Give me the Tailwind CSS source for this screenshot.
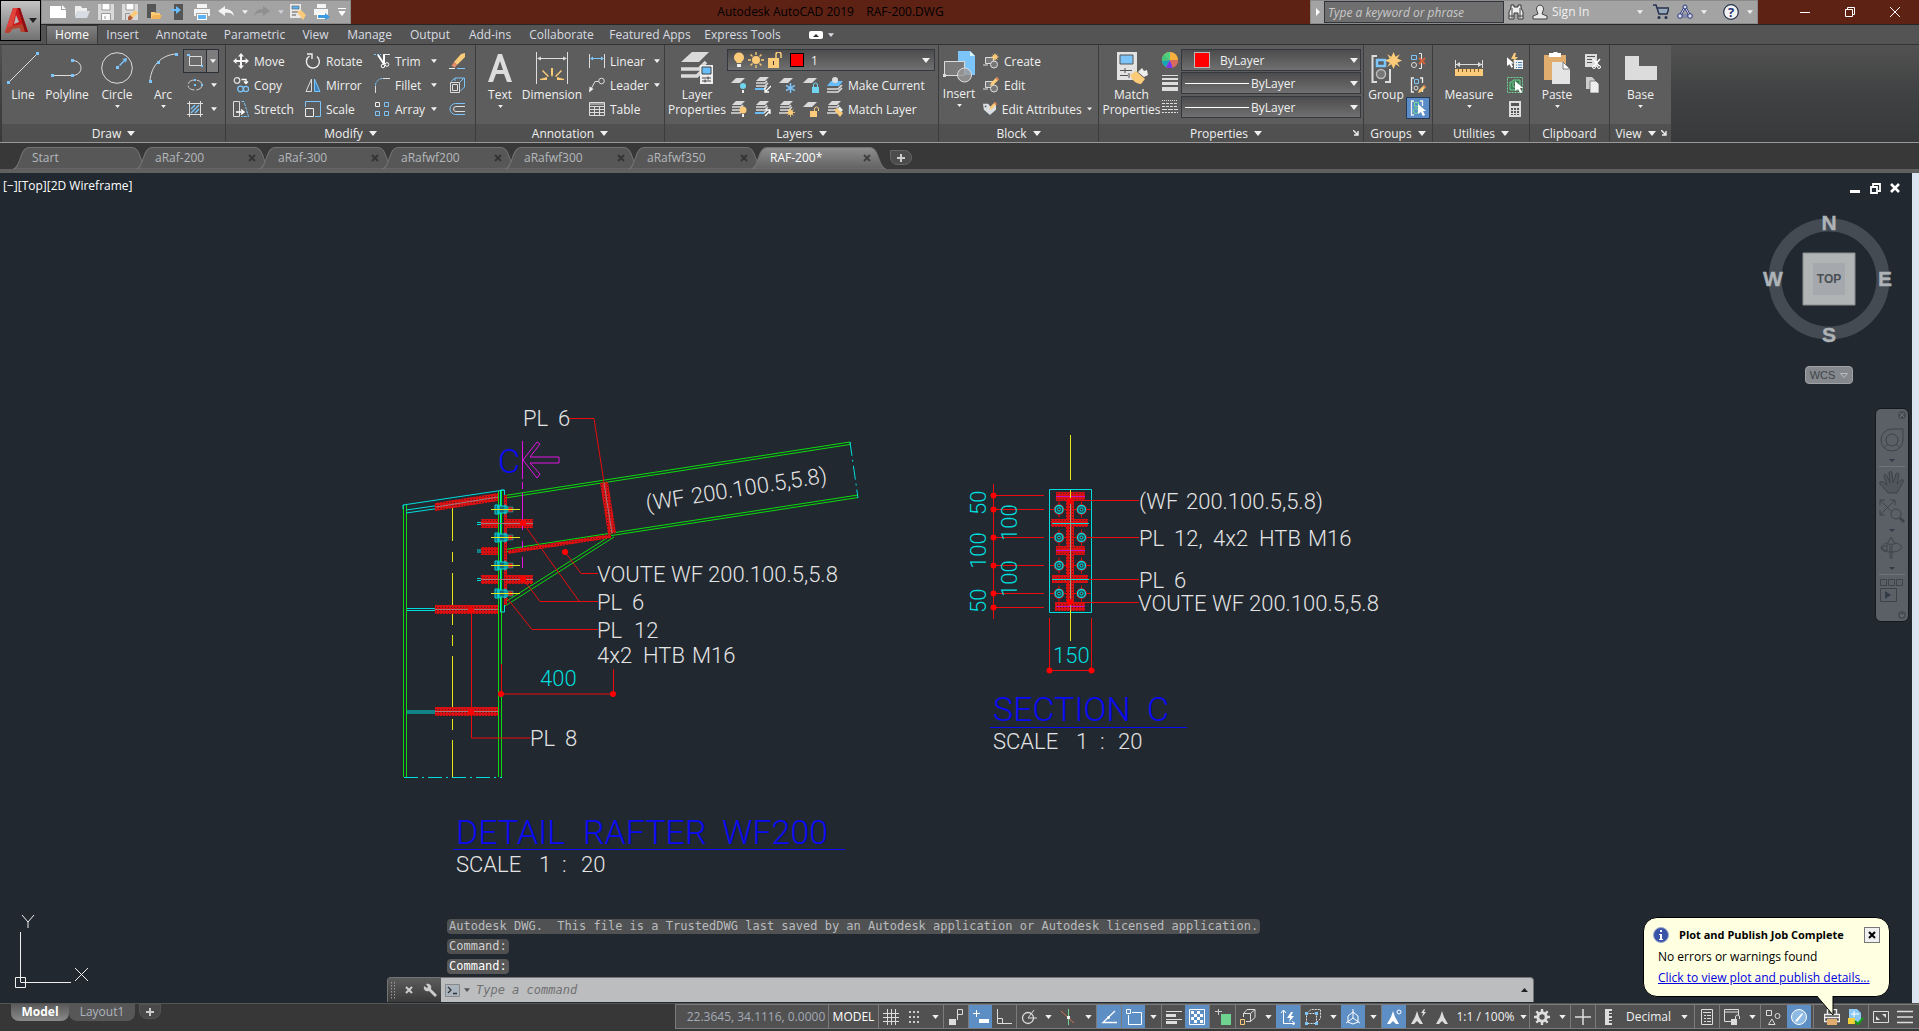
<!DOCTYPE html>
<html lang="en">
<head>
    <meta charset="UTF-8">
    <meta name="viewport" content="width=device-width, initial-scale=1.0">
    <title>Autodesk AutoCAD 2019 - RAF-200.DWG</title>
    <script src="https://cdn.jsdelivr.net/npm/@tailwindcss/browser@4"></script>
</head>
<body class="flex h-screen flex-col overflow-hidden bg-[#212830] font-['Open_Sans','Noto_Sans',sans-serif] text-xs text-[#f0f0f0]">

    <!-- shared icons -->
    <svg class="absolute h-0 w-0">
        <defs>
            <symbol id="down" viewBox="0 0 8 5"><path d="M0 0h8L4 5z" fill="currentColor"/></symbol>
            <symbol id="corner" viewBox="0 0 6 6"><path d="M0 0l4 4M5 1v4H1" fill="none" stroke="currentColor" stroke-width="1.4"/></symbol>
            <symbol id="close" viewBox="0 0 8 8"><path d="M1 1l6 6M7 1L1 7" fill="none" stroke="currentColor" stroke-width="2"/></symbol>
            <linearGradient id="active" x2="0" y2="1"><stop stop-color="#8e8e8e"/><stop offset="1" stop-color="#626262"/></linearGradient>
            <symbol id="tab" viewBox="0 0 132 21" preserveAspectRatio="none"><path d="M0 21C8 20 6 .5 16 .5h100c10 0 8 19 16 20.500z" stroke="#727272"/></symbol>

            <symbol id="printer" viewBox="0 0 16 16"><path d="M3 0h10v4H3zM0 5h16v7h-2V9H2v3H0z" fill="#f4f4f4"/><path d="M3 10h10v6H3z" fill="#fff"/><path d="M4 11h8v4H4z" fill="#5db4f5"/></symbol>
            <symbol id="move" viewBox="0 0 16 16"><path d="M8 0l3 3.500H9V7h3.500V5L16 8l-3.500 3V9H9v3.500h2L8 16l-3-3.500h2V9H3.500v2L0 8l3.500-3v2H7V3.500H5z" fill="#f4f4f4"/></symbol>
            <symbol id="copy" viewBox="0 0 16 16"><g fill="none" stroke-width="1.300"><circle cx="4" cy="3.500" r="2.800" stroke="#ddd"/><path d="M8.500 2.500H13V6M11 4.500l2 2 2-2" stroke="#fff"/><circle cx="7.500" cy="12" r="2.800" stroke="#7cc5fb"/><circle cx="13" cy="12" r="2.600" stroke="#7cc5fb"/></g></symbol>
            <symbol id="stretch" viewBox="0 0 16 16"><path d="M8.500.5h2.500l4.500 15H8" fill="none" stroke="#7cc5fb" stroke-dasharray="3 1"/><path d="M.5 15.500V.5h6v15z" fill="none" stroke="#ddd"/><path d="M3 11h7M8 8.500l3 2.500-3 2.500" fill="none" stroke="#fff" stroke-width="1.500"/></symbol>
            <symbol id="rotate" viewBox="0 0 16 16"><path d="M4.500 3A6.500 6.500 0 1 0 12 3.500" fill="none" stroke="#eee" stroke-width="1.400"/><path d="M2 1h5v5" fill="none" stroke="#eee" stroke-width="1.400"/></symbol>
            <symbol id="mirror" viewBox="0 0 16 16"><path d="M6.500 2v12.500H1z" fill="none" stroke="#ddd"/><path d="M9.500 2v12.500H15z" fill="#3d83bd" stroke="#7cc5fb"/></symbol>
            <symbol id="scale" viewBox="0 0 16 16"><path d="M.5 6V.5h15v15H10" fill="none" stroke="#7cc5fb"/><path d="M.5 7.500h8v8h-8z" fill="none" stroke="#eee"/></symbol>
            <symbol id="trim" viewBox="0 0 16 16"><path d="M0 1.500h7" stroke="#7cc5fb" stroke-dasharray="2 1"/><path d="M9 1.500h7" stroke="#eee"/><path d="M4 2l6 9M10 2v9" stroke="#fff" stroke-width="2"/><circle cx="9" cy="13" r="1.800" fill="none" stroke="#fff"/><circle cx="13" cy="11.500" r="1.800" fill="none" stroke="#fff"/></symbol>
            <symbol id="fillet" viewBox="0 0 16 16"><path d="M1.500 16V9M9 1.500h7" stroke="#ddd"/><path d="M1.500 8.500a7 7 0 0 1 7-7" fill="none" stroke="#7cc5fb" stroke-dasharray="3 1"/></symbol>
            <symbol id="array" viewBox="0 0 16 16"><g fill="none"><path d="M1.500 1.500h4v4h-4z" stroke="#eee"/><path d="M10.500 1.500h4v4h-4zM1.500 10.500h4v4h-4zM10.500 10.500h4v4h-4z" stroke="#7cc5fb"/></g></symbol>
            <symbol id="erase" viewBox="0 0 16 16"><path d="M12 1l4-1v4l-8 8-3-3z" fill="#fccb79"/><path d="M5 9l3 3-2 2.500L2.500 13z" fill="#e58d6a"/><path d="M0 15.500h6" stroke="#eee"/><path d="M8 15.500h8" stroke="#7cc5fb"/></symbol>
            <symbol id="explode" viewBox="0 0 16 16"><path d="M1.500 5.500h9v10h-9zM3.500 7.500h5v6h-5z" fill="none" stroke="#ddd"/><path d="M2 4.500l4-3.500h9.500v9l-4 4M11 5l4-4M6 1v3" fill="none" stroke="#7cc5fb"/></symbol>
            <symbol id="offset" viewBox="0 0 16 16"><path d="M16 2.500H6.500a5.500 5.500 0 0 0 0 11H16" fill="none" stroke="#7cc5fb"/><path d="M16 5.500H7a2.500 2.500 0 0 0 0 5h9" fill="none" stroke="#ddd"/></symbol>
            <symbol id="linear" viewBox="0 0 16 16"><path d="M.5 1v14M15.500 1v14" stroke="#ddd"/><path d="M2 5.500h12" stroke="#7cc5fb"/><path d="M1 5.500l3-2v4zM15 5.500l-3-2v4z" fill="#7cc5fb"/></symbol>
            <symbol id="leader" viewBox="0 0 16 16"><circle cx="12.500" cy="4" r="2.800" fill="none" stroke="#ddd"/><path d="M9.500 4.500H6L2 12" fill="none" stroke="#ddd"/><path d="M0 15.500l.5-6 4 2.500z" fill="#eee"/></symbol>
            <symbol id="table" viewBox="0 0 16 16"><path d="M.5 1.500h15v13H.5zM.5 5.500h15M.5 8.500h15M.5 11.500h15M5.500 5v9M10.500 5v9M.5 3h15" fill="none" stroke="#ddd"/></symbol>
            <symbol id="sheet" viewBox="0 0 16 16"><path d="M5 1h9l-5 5H0z" fill="#dadada"/></symbol>
            <symbol id="stack" viewBox="0 0 16 16"><path d="M5 0h9l-4 4H1z" fill="#dadada"/><path d="M1 6h9l2-2M1 9h9l3-3" fill="none" stroke="#dadada" stroke-width="1.700"/><path d="M0 12h9l3-3" fill="none" stroke="#dadada" stroke-width="1.700"/></symbol>
            <symbol id="pencil" viewBox="0 0 8 8"><path d="M6 0l2 2-5 5-3 1 1-3z" fill="#fccb79"/><path d="M6 0l2 2-1 1-2-2z" fill="#d3724f"/></symbol>
            <symbol id="shape" viewBox="0 0 16 16"><path d="M2.500 3.500h8v6h-8zM0 11h5" fill="#777" stroke="#ddd"/><circle cx="11" cy="10.500" r="3.500" fill="#777" stroke="#ddd"/></symbol>
            <symbol id="spark" viewBox="0 0 16 16"><path d="M8 0l2 4.500L14 2l-2.500 4L16 8l-4.500 2 2.500 4-4-2.500L8 16l-2-4.500L2 14l2.500-4L0 8l4.500-2L2 2l4 2.500z" fill="#fccb79"/></symbol>
            <symbol id="cursor" viewBox="0 0 8 12"><path d="M0 0l8 7H5l2 4-2 1-2-4-3 2z" fill="#fff"/></symbol>
            <symbol id="brackets" viewBox="0 0 16 16"><path d="M4 1H1.500v14H4M10 1h2.500v5M12.500 12v3" fill="none" stroke="#eee" stroke-width="1.300"/></symbol>

            <pattern id="hatch" width="3" height="3" patternUnits="userSpaceOnUse"><path d="M0 0h3v3H0z" fill="#d81012"/><path d="M1 1h1v1H1z" fill="#5a1a20"/></pattern>
            <g id="bolt">
                <path d="M-6-4.500h3v9h-3zM-3-3.500h9v7h-9zM4-5v10M-2-5v10" fill="#17687a" stroke="#00d8d8"/>
                <path d="M7-2.500h5v5H7z" fill="#c11" stroke="#00d8d8" stroke-width=".5"/>
                <path d="M-10 0h29" stroke="#e6e619"/>
            </g>
            <g id="boltend">
                <path d="M-9 0H9M0-8V8" stroke="#f00"/>
                <circle r="5.500" fill="#a01318"/><circle r="4" fill="#17505a" stroke="#0dd" stroke-width="1.300"/><circle r="1.500" fill="#600" stroke="#0dd"/>
            </g>
        </defs>
    </svg>

    <!-- title bar -->
    <header class="relative flex h-[25px] shrink-0 items-stretch border-b border-[#262626] bg-[#5e2215]">
        <button aria-label="Application menu" class="absolute left-0 top-0 z-10 flex h-[41px] w-[41px] items-center justify-center border border-black bg-linear-to-b from-[#c4c4c4] to-[#727272]">
            <svg class="h-[27px] w-[25px]" viewBox="0 0 25 27"><path d="M1 25L9 1h7l8 24h-7l-1-5-9 1-1 4z" fill="#c9191d"/><path d="M9 1h4L7 25H1z" fill="#e0423c"/><path d="M12 8l3 7-5 2z" fill="#b9b9b9"/><path d="M4 20l14-3 6 8h-7l-1-4-8 1-3 4H1z" fill="#b5432f"/><path d="M14 1h2l8 24h-3z" fill="#8c0f12"/></svg>
            <svg class="h-[5px] w-2 text-[#222]"><use href="#down"/></svg>
        </button>
        <div class="ml-[41px] flex w-[310px] shrink-0 items-center border border-[#8b8b8b] bg-[#a3a3a3] pl-2">
            <button aria-label="New" class="flex w-6 justify-start"><svg class="h-4 w-4" viewBox="0 0 16 16"><path d="M0 2h11v4h5v8H0z" fill="#fff"/><path d="M12 1l4 4h-4z" fill="#fff"/></svg></button>
            <button aria-label="Open" class="flex w-6 justify-start"><svg class="h-4 w-4" viewBox="0 0 16 16"><path d="M1 2h6l1 2h5v3H4l-3 6z" fill="#eee"/><path d="M4 7h12l-3 7H1z" fill="#d7dde2"/></svg></button>
            <button aria-label="Save" class="flex w-6 justify-start"><svg class="h-4 w-4" viewBox="0 0 16 16"><path d="M0 0h16v16H0z" fill="#dadada"/><path d="M4 0h8v6H4z" fill="#fff"/><path d="M3 9h10v7H3z" fill="#fafafa"/><path d="M4 0v6h8V0M3.500 16V9.500h9V16M7 12v3" fill="none" stroke="#999"/></svg></button>
            <button aria-label="Save as" class="flex w-6 justify-start"><svg class="h-4 w-4" viewBox="0 0 16 16"><path d="M0 0h16v16H0z" fill="#dadada"/><path d="M4 0h8v6H4z" fill="#fff"/><path d="M4 0v6h8V0M3.500 16V9.500H8" fill="none" stroke="#999"/><path d="M13 6l3 3-6 6H7v-3z" fill="#fccb79"/><path d="M8 11l3 3-2 2H6v-3z" fill="#b3603f"/></svg></button>
            <button aria-label="Open from mobile" class="flex w-6 justify-start"><svg class="h-4 w-4" viewBox="0 0 16 16"><path d="M1 0h9v14H1z" fill="#555"/><path d="M5 8h4l1 1h4v6H5z" fill="#fccb79"/><path d="M7 11h9l-2 4H5z" fill="#f2b457"/></svg></button>
            <button aria-label="Save to mobile" class="flex w-6 justify-start"><svg class="h-4 w-4" viewBox="0 0 16 16"><path d="M4 0h9v16H4z" fill="#555"/><path d="M1 5h5V2l5 4-5 4V7H1z" fill="#69bdfa"/></svg></button>
            <button aria-label="Plot" class="flex w-6 justify-start"><svg class="h-4 w-4"><use href="#printer"/></svg></button>
            <button aria-label="Undo" class="flex w-6 justify-start"><svg class="h-4 w-4" viewBox="0 0 16 16"><path d="M0 7l7-5v3c5 0 8 2 9 7-2-3-5-4-9-3v3z" fill="#f4f4f4"/></svg></button>
            <button aria-label="Undo list" class="flex w-3 justify-start"><svg class="h-[4px] w-[6px]"><use href="#down"/></svg></button>
            <button aria-label="Redo" class="flex w-6 justify-start"><svg class="h-4 w-4" viewBox="0 0 16 16"><path d="M16 7L9 2v3C4 5 1 7 0 12c2-3 5-4 9-3v3z" fill="#8f8f8f"/></svg></button>
            <button aria-label="Redo list" class="flex w-3 justify-start text-[#d0d0d8]"><svg class="h-[4px] w-[6px]"><use href="#down"/></svg></button>
            <button aria-label="Page setup" class="flex w-6 justify-start"><svg class="h-4 w-4" viewBox="0 0 16 16"><path d="M0 0h11v14H0z" fill="#e8e8e8"/><path d="M2 2h7v3H2z" fill="#5db4f5" stroke="#555" stroke-width=".6"/><path d="M2 8h6M2 11h4" stroke="#555"/><path d="M7 8l4-2 5 5-3 5z" fill="#fccb79"/></svg></button>
            <button aria-label="Batch plot" class="flex w-6 justify-start"><svg class="h-4 w-4" viewBox="0 0 16 16"><path d="M3 0h9v4H3zM0 5h14v6H0z" fill="#f4f4f4"/><path d="M3 9h9v6H3z" fill="#fff"/><path d="M4 11h7V9l5 4-5 3v-2H4z" fill="#3d9be4"/></svg></button>
            <button aria-label="Customize" class="flex w-3 justify-start"><svg class="h-2 w-2" viewBox="0 0 8 8"><path d="M0 .5h8M1 3.500h6L4 7.500z" fill="#fff" stroke="#fff"/></svg></button>
        </div>
        <h1 class="flex-1 self-center whitespace-pre text-center text-xs text-black">Autodesk AutoCAD 2019    RAF-200.DWG</h1>
        <div class="flex w-[448px] shrink-0 items-center border border-[#8b8b8b] bg-[#a3a3a3]">
            <button aria-label="Collapse search" class="flex w-[13px] justify-center"><svg class="h-2 w-1" viewBox="0 0 4 8"><path d="M0 0v8l4-4z" fill="#fff"/></svg></button>
            <input aria-label="Search" placeholder="Type a keyword or phrase" class="h-[22px] w-[180px] border border-[#30363c] bg-[#6f6f6f] px-[3px] text-xs italic outline-none placeholder:text-[#c9c9c9]">
            <button aria-label="Find" class="flex w-6 justify-center"><svg class="h-4 w-4" viewBox="0 0 16 16"><path d="M3 1h3v2h4V1h3v3l2 4v7h-5V9H6v6H1V8l2-4z" fill="#eee" stroke="#333"/><path d="M1 12h5M10 12h5M4 4v10M12 4v10" stroke="#444"/></svg></button>
            <button class="flex items-center gap-1"><svg class="ml-1 h-4 w-4" viewBox="0 0 16 16"><path d="M8 1a4 4 0 0 1 3 6l-1 3 5 2v3H1v-3l5-2-1-3a4 4 0 0 1 3-6z" fill="#e8e8e8" stroke="#444"/></svg>Sign In</button>
            <svg class="ml-12 h-[4px] w-[6px]"><use href="#down"/></svg>
            <button aria-label="App store" class="ml-[6px] flex w-6 justify-center"><svg class="h-4 w-4" viewBox="0 0 16 16"><path d="M0 1h3l3 9h8l2-6H4" fill="#9ab" stroke="#26324c" stroke-width="1.500"/><circle cx="6" cy="13.500" r="1.500" fill="#26324c"/><circle cx="13" cy="13.500" r="1.500" fill="#26324c"/></svg></button>
            <button aria-label="Autodesk app" class="flex w-6 justify-center"><svg class="h-4 w-4" viewBox="0 0 16 16"><path d="M8 3l5 9H3z" fill="none" stroke="#26367a" stroke-width="2.500"/><path d="M8 3l5 9H3z" fill="none" stroke="#dde"/><circle cx="8" cy="3" r="2" fill="#dde" stroke="#26367a"/><circle cx="3" cy="12" r="2.300" fill="#dde" stroke="#26367a"/><circle cx="13" cy="12" r="2.300" fill="#dde" stroke="#26367a"/></svg></button>
            <svg class="ml-1 h-[4px] w-[6px]"><use href="#down"/></svg>
            <button aria-label="Help" class="ml-auto flex w-6 justify-center"><svg class="h-4 w-4" viewBox="0 0 16 16"><circle cx="8" cy="8" r="7.300" fill="#f4f4f4" stroke="#26324c" stroke-width="1.200"/><text x="8" y="12.500" text-anchor="middle" class="text-[13px] font-bold" fill="#26367a">?</text></svg></button>
            <svg class="mx-1 h-[4px] w-[6px]"><use href="#down"/></svg>
        </div>
        <div class="flex w-[161px] shrink-0 items-center pl-6">
            <button aria-label="Minimize" class="flex w-[45px] justify-center"><svg class="h-[10px] w-[10px]" viewBox="0 0 10 10"><path d="M0 5.500h10" stroke="#fff"/></svg></button>
            <button aria-label="Restore" class="flex w-[45px] justify-center"><svg class="h-[10px] w-[10px]" viewBox="0 0 10 10"><path d="M.5 2.500h7v7h-7zM2.500 2V.5h7v7H8" fill="none" stroke="#fff"/></svg></button>
            <button aria-label="Close" class="flex w-[45px] justify-center"><svg class="h-[10px] w-[10px]" viewBox="0 0 10 10"><path d="M0 0l10 10M10 0L0 10" stroke="#fff"/></svg></button>
        </div>
    </header>

    <!-- ribbon tabs -->
    <nav class="flex h-5 shrink-0 items-stretch whitespace-nowrap border-b border-[#333] bg-[#545454] pl-[46px] text-[#d8dce2]">
        <a href="#" class="flex w-[52px] items-center justify-center border border-b-0 border-[#383838] bg-linear-to-b from-[#808080] to-[#5e5e5e] text-white">Home</a>
        <a href="#" class="flex w-[49px] items-center justify-center">Insert</a>
        <a href="#" class="flex w-[69px] items-center justify-center">Annotate</a>
        <a href="#" class="flex w-[77px] items-center justify-center">Parametric</a>
        <a href="#" class="flex w-[45px] items-center justify-center">View</a>
        <a href="#" class="flex w-[63px] items-center justify-center">Manage</a>
        <a href="#" class="flex w-[58px] items-center justify-center">Output</a>
        <a href="#" class="flex w-[62px] items-center justify-center">Add-ins</a>
        <a href="#" class="flex w-[81px] items-center justify-center">Collaborate</a>
        <a href="#" class="flex w-[96px] items-center justify-center">Featured Apps</a>
        <a href="#" class="flex w-[89px] items-center justify-center">Express Tools</a>
        <button aria-label="Minimize ribbon" class="ml-[22px] flex items-center gap-[5px]"><svg class="h-2 w-[14px]" viewBox="0 0 14 8"><rect width="14" height="8" rx="2" fill="#fff"/><path d="M4 6h6L7 3z" fill="#333"/></svg><svg class="h-[4px] w-[6px]"><use href="#down"/></svg></button>
    </nav>

    <!-- ribbon -->
    <main class="flex h-[98px] shrink-0 border-b border-[#9a9a9a] bg-linear-to-b from-[#525252] via-[#404142] to-[#38393a] pl-[2px] leading-[15px]">
        <section class="flex w-[224px] shrink-0 flex-col border-r border-[#3c3c3c] bg-[#5d5d5d]">
            <div class="flex h-[79px] pt-1">
                <button class="flex w-[42px] flex-col items-center gap-[3px] pt-[3px]"><svg class="h-8 w-8" viewBox="0 0 32 32"><path d="M2 30L30 2" stroke="#ddd"/><path d="M0 29h3v3H0zM29 0h3v3h-3z" fill="#7cc5fb"/></svg>Line</button>
                <button class="flex w-[46px] flex-col items-center gap-[3px] pt-[3px]"><svg class="h-8 w-8" viewBox="0 0 32 32"><path d="M1 23.500h20M21 8.500c12 0 12 15 0 15" fill="none" stroke="#ddd"/><path d="M0 22h3v3H0zM20 22h3v3h-3zM20 7h3v3h-3z" fill="#7cc5fb"/></svg>Polyline</button>
                <button class="flex w-[54px] flex-col items-center gap-[3px] pt-[3px]"><svg class="h-8 w-8" viewBox="0 0 32 32"><circle cx="16" cy="16" r="15.300" fill="none" stroke="#ddd"/><path d="M15 14h3v3h-3zM18 13l5-5-2-1 5-1-1 5-1-2-5 5z" fill="#7cc5fb"/></svg>Circle<svg class="h-[3px] w-[5px]"><use href="#down"/></svg></button>
                <button class="flex w-[38px] flex-col items-center gap-[3px] pt-[3px]"><svg class="h-8 w-8" viewBox="0 0 32 32"><path d="M3 29C4 14 14 3 29 2" fill="none" stroke="#ddd"/><path d="M2 28h3v3H2zM10 9h3v3h-3zM28 1h3v3h-3z" fill="#7cc5fb"/></svg>Arc<svg class="h-[3px] w-[5px]"><use href="#down"/></svg></button>
                <div class="ml-[1px] flex flex-col">
                    <button aria-label="Rectangle" class="flex h-6 items-center border border-[#2b3036] bg-[#6a6a6a]"><svg class="mx-[3px] h-4 w-4" viewBox="0 0 16 16"><path d="M2.500 3.500h12v9h-12z" fill="none" stroke="#ddd"/><path d="M0 1h3v2H0zM14 12h2v2h-2z" fill="#7cc5fb"/></svg><span class="flex h-full w-[12px] items-center justify-center border-l border-[#2b3036] bg-[#7c7c7c]"><svg class="h-[4px] w-[6px]"><use href="#down"/></svg></span></button>
                    <button aria-label="Ellipse" class="flex h-6 items-center gap-2 pl-1"><svg class="h-4 w-4" viewBox="0 0 16 16"><ellipse cx="8" cy="8" rx="7" ry="5" fill="none" stroke="#ccc" stroke-dasharray="8 2"/><path d="M7 7h2v2H7zM7 2h2v2H7zM14 7h2v2h-2z" fill="#7cc5fb"/></svg><svg class="h-[4px] w-[6px]"><use href="#down"/></svg></button>
                    <button aria-label="Hatch" class="flex h-6 items-center gap-2 pl-1"><svg class="h-4 w-4" viewBox="0 0 16 16"><path d="M2.500 0v16M13.500 0v16M0 2.500h16M0 13.500h16" stroke="#ddd"/><path d="M4 8l4-4M4 12l8-8M8 12l4-4" stroke="#7cc5fb" stroke-width="1.400"/></svg><svg class="h-[4px] w-[6px]"><use href="#down"/></svg></button>
                </div>
            </div>
            <button class="flex h-[18px] items-center justify-center gap-[6px] bg-[#505050]">Draw<svg class="h-[5px] w-2"><use href="#down"/></svg></button>
        </section>

        <section class="flex w-[250px] shrink-0 flex-col border-r border-[#3c3c3c] bg-[#5d5d5d]">
            <div class="flex h-[79px] pl-[7px] pt-1">
                <div class="flex w-[72px] flex-col">
                    <button class="flex h-6 items-center gap-[5px]"><svg class="h-4 w-4"><use href="#move"/></svg>Move</button>
                    <button class="flex h-6 items-center gap-[5px]"><svg class="h-4 w-4"><use href="#copy"/></svg>Copy</button>
                    <button class="flex h-6 items-center gap-[5px]"><svg class="h-4 w-4"><use href="#stretch"/></svg>Stretch</button>
                </div>
                <div class="flex w-[69px] flex-col">
                    <button class="flex h-6 items-center gap-[5px]"><svg class="h-4 w-4"><use href="#rotate"/></svg>Rotate</button>
                    <button class="flex h-6 items-center gap-[5px]"><svg class="h-4 w-4"><use href="#mirror"/></svg>Mirror</button>
                    <button class="flex h-6 items-center gap-[5px]"><svg class="h-4 w-4"><use href="#scale"/></svg>Scale</button>
                </div>
                <div class="flex w-[75px] flex-col pr-[12px]">
                    <button class="flex h-6 items-center gap-[5px]"><svg class="h-4 w-4"><use href="#trim"/></svg>Trim<svg class="ml-auto h-[4px] w-[6px]"><use href="#down"/></svg></button>
                    <button class="flex h-6 items-center gap-[5px]"><svg class="h-4 w-4"><use href="#fillet"/></svg>Fillet<svg class="ml-auto h-[4px] w-[6px]"><use href="#down"/></svg></button>
                    <button class="flex h-6 items-center gap-[5px]"><svg class="h-4 w-4"><use href="#array"/></svg>Array<svg class="ml-auto h-[4px] w-[6px]"><use href="#down"/></svg></button>
                </div>
                <div class="flex flex-col">
                    <button aria-label="Erase" class="flex h-6 items-center"><svg class="h-4 w-4"><use href="#erase"/></svg></button>
                    <button aria-label="Explode" class="flex h-6 items-center"><svg class="h-4 w-4"><use href="#explode"/></svg></button>
                    <button aria-label="Offset" class="flex h-6 items-center"><svg class="h-4 w-4"><use href="#offset"/></svg></button>
                </div>
            </div>
            <button class="flex h-[18px] items-center justify-center gap-[6px] bg-[#505050]">Modify<svg class="h-[5px] w-2"><use href="#down"/></svg></button>
        </section>

        <section class="flex w-[189px] shrink-0 flex-col border-r border-[#3c3c3c] bg-[#5d5d5d]">
            <div class="flex h-[79px] pl-1 pt-1">
                <button class="flex w-10 flex-col items-center gap-[3px] pt-[3px]"><svg class="h-8 w-8" viewBox="0 0 32 32"><path d="M4 30L14 2h4l10 28h-5l-3-8h-8l-3 8zM13 18h6l-3-9z" fill="#dcdcdc"/></svg>Text<svg class="h-[3px] w-[5px]"><use href="#down"/></svg></button>
                <button class="flex w-16 flex-col items-center gap-[3px] pt-[3px]"><svg class="h-8 w-8" viewBox="0 0 32 32"><path d="M.5 0v32M31.500 0v32M2 6.500h28" stroke="#ddd"/><path d="M1 6.500l4-2v4zM31 6.500l-4-2v4z" fill="#ddd"/><path d="M15 16h2v7l-1 2-1-2zM7 18l6 6-1 1-6-6zM25 18l-6 6 1 1 6-6zM4 27l7-2v3H4zM28 27l-7-2v3h7z" fill="#fccb79"/></svg>Dimension</button>
                <div class="ml-[5px] flex w-[71px] flex-col">
                    <button class="flex h-6 items-center gap-[5px]"><svg class="h-4 w-4"><use href="#linear"/></svg>Linear<svg class="ml-auto h-[4px] w-[6px]"><use href="#down"/></svg></button>
                    <button class="flex h-6 items-center gap-[5px]"><svg class="h-4 w-4"><use href="#leader"/></svg>Leader<svg class="ml-auto h-[4px] w-[6px]"><use href="#down"/></svg></button>
                    <button class="flex h-6 items-center gap-[5px]"><svg class="h-4 w-4"><use href="#table"/></svg>Table</button>
                </div>
            </div>
            <button class="flex h-[18px] items-center justify-center gap-[6px] bg-[#505050]">Annotation<svg class="h-[5px] w-2"><use href="#down"/></svg></button>
        </section>

        <section class="flex w-[274px] shrink-0 flex-col border-r border-[#3c3c3c] bg-[#5d5d5d]">
            <div class="flex h-[79px] pl-[2px] pr-[3px] pt-1">
                <button class="flex w-[60px] flex-col items-center gap-[3px] pt-[3px]"><svg class="h-8 w-8 shrink-0" viewBox="0 0 32 32"><path d="M11 0h17L18 10H0z" fill="#dadada"/><path d="M0 17h18l7-7M0 24h16l9-9" fill="none" stroke="#dadada" stroke-width="3.500"/><path d="M19 13h13v19H19z" fill="#eee"/><path d="M21 15h9v7h-9z" fill="#69bdfa" stroke="#444"/><path d="M21 26h9M21 29h9M27 24.500v3M24 27.500v3" stroke="#444"/></svg><span>Layer<br>Properties</span></button>
                <div class="flex flex-1 flex-col">
                    <div class="mb-[2px] flex h-[22px] items-center gap-[3px] border border-[#33383e] bg-linear-to-b from-[#4c4c4c] to-[#707070] pl-[5px] pr-1">
                        <svg class="h-4 w-3" viewBox="0 0 12 16"><circle cx="6" cy="5.500" r="5" fill="#fccb79"/><path d="M3.500 9h5v2h-5z" fill="#fccb79"/><path d="M4 12h4v3H4z" fill="#eee"/></svg>
                        <svg class="h-4 w-4" viewBox="0 0 16 16"><circle cx="8" cy="8" r="4" fill="#fccb79"/><path d="M8 0v3M8 13v3M0 8h3M13 8h3M2.500 2.500l2 2M11.500 11.500l2 2M13.500 2.500l-2 2M4.500 11.500l-2 2" stroke="#fccb79" stroke-width="1.300"/></svg>
                        <svg class="h-4 w-4" viewBox="0 0 16 16"><path d="M1 6h11v10H1z" fill="#fccb79"/><path d="M9 6V2.500a2.500 2.500 0 0 1 5 0V6" fill="none" stroke="#fccb79" stroke-width="1.500"/><path d="M6 9h1v4H6z" fill="#333"/></svg>
                        <span class="ml-1 h-[14px] w-[14px] border border-black bg-[#f00]"></span>
                        <select aria-label="Layer" class="flex-1 appearance-none bg-transparent pl-1 outline-none"><option>1</option></select>
                        <svg class="h-[5px] w-2"><use href="#down"/></svg>
                    </div>
                    <div class="flex h-6 items-center gap-2 pl-1">
                        <button aria-label="Off"><svg class="h-4 w-4" viewBox="0 0 16 16"><use href="#sheet"/><circle cx="12" cy="9" r="3" fill="#6fd6f0"/><path d="M11 13h2v3h-2z" fill="#eee"/></svg></button>
                        <button aria-label="Isolate"><svg class="h-4 w-4" viewBox="0 0 16 16"><use href="#stack"/><path d="M0 12h9" stroke="#69bdfa" stroke-width="2"/><path d="M16 9l-6 6M10 11v4h4" fill="none" stroke="#fff" stroke-width="1.300"/></svg></button>
                        <button aria-label="Freeze"><svg class="h-4 w-4" viewBox="0 0 16 16"><use href="#sheet"/><path d="M11.500 6v10M7 8.500l9 5M16 8.500l-9 5" stroke="#7cc5fb" stroke-width="1.500"/></svg></button>
                        <button aria-label="Lock"><svg class="h-4 w-4" viewBox="0 0 16 16"><use href="#sheet"/><path d="M9 10h7v6H9z" fill="#6fd6f0"/><path d="M10.500 10V8a2 2 0 0 1 4 0v2" fill="none" stroke="#6fd6f0"/></svg></button>
                        <button class="flex items-center gap-[5px] whitespace-nowrap"><svg class="h-4 w-4" viewBox="0 0 16 16"><path d="M4 4h12l-4 5H0z" fill="#69bdfa"/><circle cx="8" cy="3" r="3" fill="#ddd"/><path d="M0 12h11l4-4M0 15h11l4-4" fill="none" stroke="#ddd" stroke-width="1.600"/></svg>Make Current</button>
                    </div>
                    <div class="flex h-6 items-center gap-2 pl-1">
                        <button aria-label="Turn all on"><svg class="h-4 w-4" viewBox="0 0 16 16"><use href="#stack"/><circle cx="12" cy="9" r="3.500" fill="#fccb79"/><path d="M11 13h2v3h-2z" fill="#eee"/></svg></button>
                        <button aria-label="Unisolate"><svg class="h-4 w-4" viewBox="0 0 16 16"><use href="#stack"/><path d="M0 12h9" stroke="#69bdfa" stroke-width="2"/><path d="M10 15l5-5M11 9h4v4" fill="none" stroke="#fff" stroke-width="1.300"/></svg></button>
                        <button aria-label="Thaw all"><svg class="h-4 w-4" viewBox="0 0 16 16"><use href="#stack"/><circle cx="11.500" cy="11.500" r="2.500" fill="#fccb79"/><path d="M11.500 7v9M7 11.500h9M8.500 8.500l6 6M14.500 8.500l-6 6" stroke="#fccb79" stroke-width=".8"/></svg></button>
                        <button aria-label="Unlock"><svg class="h-4 w-4" viewBox="0 0 16 16"><use href="#sheet"/><path d="M7 10h7v6H7z" fill="#fccb79"/><path d="M11.500 10V8a2 2 0 0 1 4 0v2" fill="none" stroke="#fccb79"/></svg></button>
                        <button class="flex items-center gap-[5px] whitespace-nowrap"><svg class="h-4 w-4" viewBox="0 0 16 16"><use href="#stack"/><path d="M7 9l3-2 6 5-3 4z" fill="#fccb79"/><path d="M13 6l3 3-2 2-3-3z" fill="#eee"/></svg>Match Layer</button>
                    </div>
                </div>
            </div>
            <button class="flex h-[18px] items-center justify-center gap-[6px] bg-[#505050]">Layers<svg class="h-[5px] w-2"><use href="#down"/></svg></button>
        </section>

        <section class="flex w-[160px] shrink-0 flex-col border-r border-[#3c3c3c] bg-[#5d5d5d]">
            <div class="flex h-[79px] pt-1">
                <button class="flex w-10 flex-col items-center gap-[3px] pt-[2px]"><svg class="h-8 w-8" viewBox="0 0 32 32"><path d="M15 0h12l5 5v19H15z" fill="#7cc5fb"/><path d="M27 0v5h5z" fill="#d9f4f8"/><path d="M1.500 10.500h20v14h-20z" fill="#7a7a7a" stroke="#ddd"/><circle cx="21.500" cy="24" r="7" fill="#999" fill-opacity=".8" stroke="#ddd"/><path d="M0 23h3v3H0z" fill="#ddd"/></svg>Insert<svg class="h-[3px] w-[5px]"><use href="#down"/></svg></button>
                <div class="ml-1 flex w-[109px] flex-col whitespace-nowrap">
                    <button class="flex h-6 items-center gap-[5px]"><svg class="h-4 w-4" viewBox="0 0 16 16"><use href="#shape" y="1"/><use href="#spark" x="8" width="8" height="8"/></svg>Create</button>
                    <button class="flex h-6 items-center gap-[5px]"><svg class="h-4 w-4" viewBox="0 0 16 16"><use href="#shape" y="1"/><use href="#pencil" x="7" width="9" height="9"/></svg>Edit</button>
                    <button class="flex h-6 items-center gap-[5px]"><svg class="h-4 w-4" viewBox="0 0 16 16"><path d="M0 2h6l3 4 6-3v6l-7 6-7-6z" fill="#dadfe4"/><circle cx="3" cy="5" r="1" fill="#555"/><use href="#pencil" x="7" width="9" height="9"/></svg>Edit Attributes<svg class="ml-auto h-[4px] w-[6px]"><use href="#down"/></svg></button>
                </div>
            </div>
            <button class="flex h-[18px] items-center justify-center gap-[6px] bg-[#505050]">Block<svg class="h-[5px] w-2"><use href="#down"/></svg></button>
        </section>

        <section class="flex w-[265px] shrink-0 flex-col border-r border-[#3c3c3c] bg-[#5d5d5d]">
            <div class="flex h-[79px] pl-[2px] pr-[2px] pt-1">
                <button class="flex w-[61px] flex-col items-center gap-[3px] pt-[3px]"><svg class="h-8 w-8 shrink-0" viewBox="0 0 32 32"><path d="M1 0h20v28H1z" fill="#e2e2e2"/><path d="M4 3h13v9H4z" fill="#7cc5fb" stroke="#555"/><path d="M4 18.500h12M4 23.500h8M9 16v5M13 21v5" stroke="#555"/><path d="M14 23l6-4 9 8-4 5c-5 0-9-4-11-9z" fill="#fccb79"/><path d="M22 20l4-4 2 3 3-1 1 5-4 2z" fill="#eee"/></svg><span>Match<br>Properties</span></button>
                <div class="grid flex-1 grid-cols-[19px_1fr] grid-rows-[23px_24px_22px] items-start">
                    <svg class="mt-[3px] h-4 w-4" viewBox="0 0 16 16"><circle cx="8" cy="8" r="8" fill="#f9b03c"/><path d="M8 8L2 2.500A8 8 0 0 1 8 0z" fill="#4cd184"/><path d="M8 8L0 9a8 8 0 0 1 2-6.500z" fill="#3fc77c"/><path d="M8 8L0 9a8 8 0 0 0 4 6z" fill="#13a5b9"/><path d="M8 8l-4 7a8 8 0 0 0 7 .5z" fill="#7a35e8"/><path d="M8 8h8a8 8 0 0 1-5 7.500z" fill="#d86b5d"/></svg>
                    <div class="flex h-[22px] items-center border border-[#33383e] bg-linear-to-b from-[#4c4c4c] to-[#707070] pl-3 pr-[2px]"><span class="h-4 w-4 border border-[#bbb] bg-[#f00]"></span><select aria-label="Object color" class="flex-1 appearance-none bg-transparent pl-[10px] outline-none"><option>ByLayer</option></select><svg class="h-[5px] w-2"><use href="#down"/></svg></div>
                    <svg class="mt-[3px] h-4 w-4" viewBox="0 0 16 16"><path d="M0 0h16v1H0zM0 3h16v2H0zM0 7h16v3H0zM0 12h16v4H0z" fill="#ddd"/></svg>
                    <div class="flex h-[22px] items-center border border-[#33383e] bg-linear-to-b from-[#4c4c4c] to-[#707070] pl-[3px] pr-[2px]"><span class="h-px w-16 bg-white"></span><select aria-label="Lineweight" class="flex-1 appearance-none bg-transparent pl-[2px] outline-none"><option>ByLayer</option></select><svg class="h-[5px] w-2"><use href="#down"/></svg></div>
                    <svg class="mt-[3px] h-4 w-4" viewBox="0 0 16 16"><path d="M0 1.500h16" stroke="#ddd" stroke-dasharray="1 1"/><path d="M0 4.500h16M0 7.500h16" stroke="#ddd" stroke-dasharray="3 1"/><path d="M0 10.500h16" stroke="#ddd" stroke-dasharray="5 1"/><path d="M0 13.500h16" stroke="#ddd" stroke-dasharray="2 1"/></svg>
                    <div class="flex h-[22px] items-center border border-[#33383e] bg-linear-to-b from-[#4c4c4c] to-[#707070] pl-[3px] pr-[2px]"><span class="h-px w-16 bg-white"></span><select aria-label="Linetype" class="flex-1 appearance-none bg-transparent pl-[2px] outline-none"><option>ByLayer</option></select><svg class="h-[5px] w-2"><use href="#down"/></svg></div>
                </div>
            </div>
            <div class="flex h-[18px] items-center bg-[#505050] pr-1"><button class="flex flex-1 items-center justify-center gap-[6px]">Properties<svg class="h-[5px] w-2"><use href="#down"/></svg></button><svg class="h-[6px] w-[6px]"><use href="#corner"/></svg></div>
        </section>

        <section class="flex w-[69px] shrink-0 flex-col border-r border-[#3c3c3c] bg-[#5d5d5d]">
            <div class="flex h-[79px] pl-[2px] pt-1">
                <button class="flex w-10 flex-col items-center gap-[3px] pt-[3px]"><svg class="h-8 w-8" viewBox="0 0 32 32"><path d="M7 4H2.500v26H7M15 30h5V17" fill="none" stroke="#ddd" stroke-width="2"/><path d="M7 8h8v6H7z" fill="none" stroke="#7cc5fb" stroke-width="2.500"/><circle cx="11" cy="22" r="4.500" fill="#777" stroke="#bbb" stroke-width="1.500"/><use href="#spark" x="15" width="17" height="17"/></svg>Group</button>
                <div class="flex flex-col">
                    <button aria-label="Ungroup" class="flex h-6 w-6 items-center justify-center"><svg class="h-4 w-4" viewBox="0 0 16 16"><path d="M1.500 2.500h5v4h-5z" fill="none" stroke="#7cc5fb"/><circle cx="4" cy="12" r="2.500" fill="none" stroke="#ddd"/><path d="M9 .5h2.500v15H9" fill="none" stroke="#eee"/><path d="M9 5l6 6M15 5l-6 6" stroke="#d0623c" stroke-width="2"/></svg></button>
                    <button aria-label="Group edit" class="flex h-6 w-6 items-center justify-center"><svg class="h-4 w-4" viewBox="0 0 16 16"><use href="#brackets"/><path d="M4.500 2.500h4v4h-4z" fill="none" stroke="#7cc5fb"/><circle cx="6" cy="11" r="2" fill="none" stroke="#ddd"/><use href="#pencil" x="8" y="8" width="8" height="8"/></svg></button>
                    <button aria-label="Group selection" class="flex h-[22px] w-6 items-center justify-center border border-[#243a58] bg-[#5a8cc8]"><svg class="h-4 w-4" viewBox="0 0 16 16"><use href="#brackets"/><path d="M4.500 2.500h4v4h-4z" fill="none" stroke="#6fe08f"/><circle cx="6" cy="11" r="2.500" fill="none" stroke="#6fe08f"/><use href="#cursor" x="8" y="4" width="8" height="12"/></svg></button>
                </div>
            </div>
            <button class="flex h-[18px] items-center justify-center gap-[6px] bg-[#505050]">Groups<svg class="h-[5px] w-2"><use href="#down"/></svg></button>
        </section>

        <section class="flex w-[97px] shrink-0 flex-col border-r border-[#3c3c3c] bg-[#5d5d5d]">
            <div class="flex h-[79px] pl-1 pt-1">
                <button class="flex w-16 flex-col items-center gap-[3px] pt-[3px]"><svg class="h-8 w-8" viewBox="0 0 32 32"><path d="M2.500 8v8M29.500 8v8M3 12.500h26" stroke="#ddd"/><path d="M3 12.500l4-2.500v5zM29 12.500l-4-2.500v5z" fill="#ddd"/><path d="M2 17h28v7H2z" fill="#fccb79"/><path d="M5.500 17v3M9.500 17v3M13.500 17v3M17.500 17v3M21.500 17v3M25.500 17v3" stroke="#7a6033"/></svg>Measure<svg class="h-[3px] w-[5px]"><use href="#down"/></svg></button>
                <div class="ml-[2px] flex flex-col">
                    <button aria-label="Quick select" class="flex h-6 w-6 items-center justify-center"><svg class="h-4 w-4" viewBox="0 0 16 16"><path d="M7 0L4 6h3l-1 3 5-5H8l1-4z" fill="#fccb79"/><use href="#cursor" y="4" width="7" height="11"/><path d="M7 7h9v9H7z" fill="#eee"/><path d="M9 9.500h1M11 9.500h4M9 12h1M11 12h4M9 14.500h1M11 14.500h4" stroke="#3d83bd"/></svg></button>
                    <button aria-label="Select all" class="flex h-6 w-6 items-center justify-center"><svg class="h-4 w-4" viewBox="0 0 16 16"><path d="M.5.5h15v15H.5z" fill="none" stroke="#6fd48f" stroke-dasharray="2 1"/><path d="M5 5H3v8h8v-2M6 3h7v7H6z" fill="#3c7a54" stroke="#6fd48f"/><use href="#cursor" x="8" y="4" width="8" height="12"/></svg></button>
                    <button aria-label="Quick calculator" class="flex h-6 w-6 items-center justify-center"><svg class="h-4 w-4" viewBox="0 0 16 16"><path d="M2 0h12v16H2z" fill="#ddd"/><path d="M4 2h8v3H4zM4 7h2v2H4zM7 7h2v2H7zM10 7h2v2h-2zM4 10h2v2H4zM7 10h2v2H7zM10 10h2v2h-2zM4 13h2v1H4zM7 13h2v1H7zM10 13h2v1h-2z" fill="#555"/></svg></button>
                </div>
            </div>
            <button class="flex h-[18px] items-center justify-center gap-[6px] bg-[#505050]">Utilities<svg class="h-[5px] w-2"><use href="#down"/></svg></button>
        </section>

        <section class="flex w-[80px] shrink-0 flex-col border-r border-[#3c3c3c] bg-[#5d5d5d]">
            <div class="flex h-[79px] pl-[3px] pt-1">
                <button class="flex w-12 flex-col items-center gap-[3px] pt-[3px]"><svg class="h-8 w-8" viewBox="0 0 32 32"><path d="M3 3h22v25H3z" fill="#e0ad6e"/><path d="M8 1h4l1-1h3l1 1h3v4H8z" fill="#fff"/><path d="M11 10h11l7 7v15H11z" fill="#e4e4e4"/><path d="M22 10v7h7z" fill="#fff" stroke="#666" stroke-width=".8"/></svg>Paste<svg class="h-[3px] w-[5px]"><use href="#down"/></svg></button>
                <div class="flex flex-col">
                    <button aria-label="Cut" class="flex h-6 w-6 items-center justify-center"><svg class="h-4 w-4" viewBox="0 0 16 16"><path d="M0 1h12v13H0z" fill="#ddd"/><path d="M2 3.500h8M2 6.500h5M2 9.500h5" stroke="#555"/><path d="M8 6l6 7M15 6l-6 7" stroke="#fff" stroke-width="1.500"/><circle cx="9" cy="14" r="1.500" fill="none" stroke="#fff"/><circle cx="14" cy="14" r="1.500" fill="none" stroke="#fff"/></svg></button>
                    <button aria-label="Copy clip" class="flex h-6 w-6 items-center justify-center"><svg class="h-4 w-4" viewBox="0 0 16 16"><path d="M1 0h6l3 3v9H1z" fill="#ccc"/><path d="M5 4h6l3 3v9H5z" fill="#eee" stroke="#5d5d5d" stroke-width=".7"/></svg></button>
                </div>
            </div>
            <div class="flex h-[18px] items-center justify-center bg-[#505050]">Clipboard</div>
        </section>

        <section class="flex w-[61px] shrink-0 flex-col bg-[#5d5d5d]">
            <div class="flex h-[79px] justify-center pt-1">
                <button class="flex flex-col items-center gap-[3px] pt-[3px]"><svg class="h-8 w-8" viewBox="0 0 32 32"><path d="M0 4h14v10h18v14H0z" fill="#dcdcdc"/></svg>Base<svg class="h-[3px] w-[5px]"><use href="#down"/></svg></button>
            </div>
            <div class="flex h-[18px] items-center bg-[#505050] pr-1"><button class="flex flex-1 items-center justify-center gap-[6px]">View<svg class="h-[5px] w-2"><use href="#down"/></svg></button><svg class="h-[6px] w-[6px]"><use href="#corner"/></svg></div>
        </section>
    </main>

    <!-- drawing tabs -->
    <nav class="isolate flex h-[30px] shrink-0 items-end border-b-4 border-[#606060] bg-[#383838] pl-[21px] text-[#b4b7bc]">
        <a href="#" class="relative flex h-[22px] w-[123px] items-center px-[11px]"><svg class="absolute inset-y-0 -left-2 -z-10 h-full w-[135px]" fill="#575757"><use href="#tab"/></svg>Start</a>
        <a href="#" class="relative flex h-[22px] w-[123px] items-center justify-between px-[11px]"><svg class="absolute inset-y-0 -left-2 -z-10 h-full w-[135px]" fill="#575757"><use href="#tab"/></svg>aRaf-200<svg class="h-2 w-2 text-[#353535]"><use href="#close"/></svg></a>
        <a href="#" class="relative flex h-[22px] w-[123px] items-center justify-between px-[11px]"><svg class="absolute inset-y-0 -left-2 -z-10 h-full w-[135px]" fill="#575757"><use href="#tab"/></svg>aRaf-300<svg class="h-2 w-2 text-[#353535]"><use href="#close"/></svg></a>
        <a href="#" class="relative flex h-[22px] w-[123px] items-center justify-between px-[11px]"><svg class="absolute inset-y-0 -left-2 -z-10 h-full w-[135px]" fill="#575757"><use href="#tab"/></svg>aRafwf200<svg class="h-2 w-2 text-[#353535]"><use href="#close"/></svg></a>
        <a href="#" class="relative flex h-[22px] w-[123px] items-center justify-between px-[11px]"><svg class="absolute inset-y-0 -left-2 -z-10 h-full w-[135px]" fill="#575757"><use href="#tab"/></svg>aRafwf300<svg class="h-2 w-2 text-[#353535]"><use href="#close"/></svg></a>
        <a href="#" class="relative flex h-[22px] w-[123px] items-center justify-between px-[11px]"><svg class="absolute inset-y-0 -left-2 -z-10 h-full w-[135px]" fill="#575757"><use href="#tab"/></svg>aRafwf350<svg class="h-2 w-2 text-[#353535]"><use href="#close"/></svg></a>
        <a href="#" class="relative flex h-[22px] w-[123px] items-center justify-between px-[11px] text-white"><svg class="absolute inset-y-0 -left-2 -z-10 h-full w-[135px]" fill="url(#active)"><use href="#tab"/></svg>RAF-200*<svg class="h-2 w-2 text-[#404040]"><use href="#close"/></svg></a>
        <button aria-label="New drawing" class="mb-1 ml-2 flex h-[15px] w-[22px] items-center justify-center rounded-b-lg rounded-tr-lg border border-[#666] bg-[#4c4c4c]"><svg class="h-2 w-2" viewBox="0 0 8 8"><path d="M4 0v8M0 4h8" stroke="#ccc" stroke-width="2"/></svg></button>
    </nav>

    <!-- model space -->
    <div class="relative flex-1 border-r-[7px] border-[#dbe4f1] bg-[#212830]">
        <svg class="absolute inset-0 h-full w-full font-['Roboto',sans-serif] text-[22px] font-light" viewBox="0 173 1912 830" preserveAspectRatio="xMinYMin meet" fill="none" role="img" aria-label="Rafter connection detail">
            <!-- UCS icon -->
            <g stroke="#f0f0f0"><path d="M20.500 932v50M20.500 982.500H71M15.500 977.500h10v10h-10z"/><path d="M22 915l6 7 6-7M28 922v6M75 968l13 13M88 968l-13 13"/></g>

            <!-- column -->
            <g stroke="#0cdc0c">
                <path d="M403.500 505v272M406.500 505v272M498.500 491v286M501.500 491v286"/>
                <path d="M505 495.500L850 442M505 498L850 444.500M850 442v3M858 495L505 549.500M858 497.500L505 552"/>
                <path d="M612 535L505 602M614 537L505 606"/>
            </g>
            <g stroke="#0dd">
                <path d="M403 505l101-15M406 510l92-13M406 513l92-13M500.500 490h4v122h-4zM403 505v4"/>
                <path d="M407 608.500h91M407 610.500h91M407 711h91M407 713h91"/>
                <path d="M477 522.500h21M477 524.500h21M477 550h21M477 552h21M477 578.500h21M477 580.500h21"/>
                <path d="M404 777.500h98" stroke-dasharray="14 4 2 4"/>
                <path d="M850 442l8 56" stroke-dasharray="14 4 2 4"/>
            </g>
            <path d="M452.500 503v38M452.500 552v10M452.500 573v52M452.500 635v11M452.500 656v51M452.500 719v11M452.500 740v37" stroke="#e6e619"/>
            <g fill="url(#hatch)">
                <path d="M435 503l63-10v8l-63 10z"/>
                <path d="M435 605h63v9h-63zM435 707h63v9h-63z"/>
                <path d="M481 519h17v9h-17zM504 519h29v9h-29zM481 547h17v8h-17zM481 575h17v9h-17zM504 575h29v9h-29z"/>
                <path d="M504 495h3v110h-3z"/>
                <path d="M600 483l8-1 8 51-8 1z"/>
                <path d="M508 550l103-16v4l-103 16z"/>
            </g>
            <path d="M435 609.500h63M435 711.500h63M481 523.500h52M481 579.500h52M436 507l62-10M604 483l8 50" stroke="#a5777a"/>
            <use href="#bolt" x="501" y="509.500"/><use href="#bolt" x="501" y="537.500"/><use href="#bolt" x="501" y="565.500"/><use href="#bolt" x="501" y="593.500"/>

            <!-- section mark -->
            <g stroke="#e312e3"><path d="M522.500 441v38M522.500 482v7M522.500 493v37M522.500 541v7M522.500 557v11"/><path d="M523 460l14-18 3 2-10 13h29v6h-29l10 11-3 4z"/></g>

            <!-- leaders and dimensions -->
            <g stroke="#e80c0c">
                <path d="M568 418.500h26l10 64M565 552l16 21.500h17M523 523l56 78M523 579l17 22.500h58M507 598l25 31.500h66M471.500 610v128h59"/>
                <path d="M501.500 664v30M613.500 669v25M501 694h112"/>
                <path d="M993.500 484v135M993 495.500h51M993 509.500h51M993 537.500h51M993 565.500h51M993 593.500h51M993 607.500h51"/>
                <path d="M1049.500 618v54M1091.500 618v54M1049 670.500h42"/>
            </g>
            <g fill="#f00">
                <circle cx="565" cy="552" r="3"/><circle cx="523" cy="523" r="3"/><circle cx="523" cy="579" r="3"/><circle cx="471" cy="610" r="3"/><circle cx="471" cy="712" r="3"/>
                <circle cx="501" cy="694" r="3"/><circle cx="613" cy="694" r="3"/>
                <circle cx="993.500" cy="495.500" r="3"/><circle cx="993.500" cy="509.500" r="3"/><circle cx="993.500" cy="537.500" r="3"/><circle cx="993.500" cy="565.500" r="3"/><circle cx="993.500" cy="593.500" r="3"/><circle cx="993.500" cy="607.500" r="3"/>
                <circle cx="1049.500" cy="670.500" r="3"/><circle cx="1091.500" cy="670.500" r="3"/>
            </g>

            <!-- section C -->
            <path d="M1049.500 489.500h42v123h-42z" stroke="#0dd"/>
            <g fill="url(#hatch)">
                <path d="M1056 492h29v9h-29zM1051 519h37v8h-37zM1056 546h29v9h-29zM1052 575h36v8h-36zM1055 602h30v9h-30zM1066 500h8v104h-8z"/>
            </g>
            <path d="M1056 496.500h29M1056 550.500h29M1056 606.500h29M1070.500 503v18M1070.500 555v18M1070.500 588v14" stroke="#c312c3"/>
            <path d="M1052 523.500h37M1052 579.500h37" stroke="#0dd"/>
            <path d="M1070.500 438v42M1070.500 490v13M1070.500 610v31" stroke="#e6e619"/>
            <path d="M1070.500 503v107" stroke="#a49a80"/>
            <path d="M1070.500 435v45" stroke="#e6e619"/>
            <path d="M1070 500.500h69M1090 537.500h49M1089 579.500h50M1070 602.500h69" stroke="#e80c0c"/>
            <circle cx="1070" cy="501" r="3" fill="#f00"/><circle cx="1070" cy="602" r="3" fill="#f00"/>
            <use href="#boltend" x="1059" y="509.500"/><use href="#boltend" x="1081.500" y="509.500"/>
            <use href="#boltend" x="1059" y="537.500"/><use href="#boltend" x="1081.500" y="537.500"/>
            <use href="#boltend" x="1059" y="565.500"/><use href="#boltend" x="1081.500" y="565.500"/>
            <use href="#boltend" x="1059" y="593.500"/><use href="#boltend" x="1081.500" y="593.500"/>

            <!-- notes -->
            <g fill="#e4e4e4">
                <text x="523" y="426">PL <tspan x="558">6</tspan></text>
                <text transform="translate(647 511) rotate(-9)">(WF <tspan x="46">200.100.5,5.8)</tspan></text>
                <text x="597" y="582">VOUTE <tspan x="671">WF</tspan> <tspan x="708">200.100.5,5.8</tspan></text>
                <text x="597" y="610">PL <tspan x="632">6</tspan></text>
                <text x="597" y="638">PL <tspan x="634">12</tspan></text>
                <text x="597" y="663">4x2 <tspan x="643">HTB</tspan> <tspan x="692">M16</tspan></text>
                <text x="530" y="746">PL <tspan x="565">8</tspan></text>
                <text x="456" y="872">SCALE <tspan x="539">1</tspan> <tspan x="562">:</tspan> <tspan x="581">20</tspan></text>
                <text x="1139" y="509">(WF <tspan x="1186">200.100.5,5.8)</tspan></text>
                <text x="1139" y="546">PL <tspan x="1174">12,</tspan> <tspan x="1213">4x2</tspan> <tspan x="1259">HTB</tspan> <tspan x="1308">M16</tspan></text>
                <text x="1139" y="588">PL <tspan x="1174">6</tspan></text>
                <text x="1138" y="611">VOUTE <tspan x="1212">WF</tspan> <tspan x="1249">200.100.5,5.8</tspan></text>
                <text x="993" y="749">SCALE <tspan x="1076">1</tspan> <tspan x="1100">:</tspan> <tspan x="1118">20</tspan></text>
            </g>
            <g fill="#0dd">
                <text x="540" y="686">400</text>
                <text x="1053" y="663">150</text>
                <text transform="translate(986 515) rotate(-90)">50</text>
                <text transform="translate(986 569) rotate(-90)">100</text>
                <text transform="translate(986 613) rotate(-90)">50</text>
                <text transform="translate(1017 541) rotate(-90)">100</text>
                <text transform="translate(1017 597) rotate(-90)">100</text>
            </g>
            <g fill="#0a0af5" class="text-[34px]">
                <text x="498" y="473">C</text>
                <text x="456" y="844">DETAIL <tspan x="583">RAFTER</tspan> <tspan x="722">WF200</tspan></text>
                <text x="993" y="721">SECTION <tspan x="1147">C</tspan></text>
            </g>
            <path d="M453 849.500h392M990 727.500h197" stroke="#0a0af5"/>
        </svg>

        <p class="absolute left-[3px] top-[5px] text-white">[−][Top][2D Wireframe]</p>

        <div class="absolute right-[11px] top-[10px] flex gap-[9px]">
            <button aria-label="Minimize drawing" class="h-[11px] w-[11px]"><svg class="h-[11px] w-[11px]" viewBox="0 0 11 11"><path d="M0 7h10v3H0z" fill="#fff"/></svg></button>
            <button aria-label="Restore drawing" class="h-[11px] w-[11px]"><svg class="h-[11px] w-[11px]" viewBox="0 0 11 11"><path d="M1 4h6v6H1zM3 3V1h7v7H8" fill="none" stroke="#fff" stroke-width="1.800"/></svg></button>
            <button aria-label="Close drawing" class="h-[11px] w-[11px]"><svg class="h-[11px] w-[11px]" viewBox="0 0 11 11"><path d="M1 1l8 8M9 1L1 9" stroke="#fff" stroke-width="2.500"/></svg></button>
        </div>

        <!-- view cube -->
        <div class="absolute right-[15px] top-[38px] flex w-[136px] flex-col items-center">
            <svg class="h-[136px] w-[136px] font-['Liberation_Sans',sans-serif] text-[21px] font-bold" viewBox="0 0 136 136">
                <circle cx="68" cy="68" r="54" fill="none" stroke="#444b53" stroke-width="13"/>
                <g fill="#aeb3b7" stroke="#aeb3b7" stroke-width=".4" text-anchor="middle"><text x="68" y="19">N</text><text x="68" y="131">S</text><text x="12" y="75">W</text><text x="124" y="75">E</text></g>
                <path d="M42 42h52v52H42z" fill="#b0b4b4" stroke="#888c8e"/><path d="M52 52h32v32H52z" fill="#a5a8ad"/>
                <text x="68" y="72" text-anchor="middle" class="text-xs" fill="#4b4f54">TOP</text>
            </svg>
            <button class="mt-[19px] flex h-[18px] w-12 items-center justify-center gap-[5px] rounded border border-[#a0a3a6] bg-[#85898e] font-['Liberation_Sans',sans-serif] text-[11px] text-[#3f444a]">WCS<svg class="h-[5px] w-2" viewBox="0 0 8 5"><path d="M.5.5h7L4 4.500z" fill="none" stroke="#bbb"/></svg></button>
        </div>

        <!-- navigation bar -->
        <div class="absolute right-[3px] top-[235px] flex h-[214px] w-[34px] flex-col items-center rounded-md border border-[#15181c] bg-[#5b6067]">
            <svg class="h-[212px] w-8" viewBox="0 0 32 212" fill="none" stroke="#3e4349">
                <circle cx="26" cy="6" r="4" fill="#484d53" stroke="none"/><path d="M24 4l4 4M28 4l-4 4" stroke="#6a6f75"/>
                <path d="M16 20h11v11a11 11 0 1 1-11-11z"/><circle cx="16" cy="31" r="6"/><path d="M8 39l4-4M20 35l4 4"/>
                <path d="M13 50h6l-3 3z" fill="#333a48" stroke="none"/><path d="M3 57.500h26" stroke="#707479"/>
                <path d="M12 84l-8-9c-1-2 1-3 3-2l4 3-3-9c0-2 2-2 3 0l3 7-1-10c0-2 3-2 3 0l1 10 3-9c1-2 3-1 3 1l-2 9 4-4c2-1 3 0 2 2l-6 11z" fill="#51565c"/>
                <path d="M4 91l15 15M19 91L4 106M4 96v-5h5M14 91h5v5M4 101v5h5"/><circle cx="20" cy="105" r="5" fill="#5b6067"/><path d="M24 109l4 4" stroke-width="3"/>
                <path d="M13 120h6l-3 3z" fill="#333a48" stroke="none"/>
                <path d="M14 149v-14h-3l4-7 4 7h-3v14zM10 134c-8 4-6 9 5 9 13 0 13-8 4-9M5 139l6-3v6z"/>
                <path d="M13 158h6l-3 3z" fill="#333a48" stroke="none"/><path d="M3 165.500h26" stroke="#707479"/>
                <path d="M4.500 170.500h6v6h-6zM12.500 170.500h6v6h-6zM20.500 170.500h6v6h-6zM4.500 179.500h16v13h-16z"/><path d="M9 182l6 4-6 4z" fill="#333a48" stroke="none"/>
                <circle cx="26" cy="206" r="4" fill="#484d53" stroke="none"/><path d="M24 206h4l-2 2z" stroke="#6a6f75"/>
            </svg>
        </div>

        <!-- command line -->
        <div class="absolute bottom-[1px] left-[387px] w-[1147px]">
            <div class="flex flex-col items-start gap-[5px] pb-[3px] pl-[60px] font-['DejaVu_Sans_Mono',monospace] text-xs leading-[15px]">
                <p class="whitespace-pre rounded-sm bg-[#4f5153] px-[2px] text-[#b9bbbd]">Autodesk DWG.  This file is a TrustedDWG last saved by an Autodesk application or Autodesk licensed application.</p>
                <p class="rounded-sm bg-[#505050] px-[2px] text-[#d0d0d0]">Command:</p>
                <p class="rounded-sm bg-[#585858] px-[2px] text-white">Command:</p>
            </div>
            <div class="flex h-[25px] items-center rounded-t-sm border border-b-0 border-[#747474] bg-[#bcbdbf]">
                <div class="flex h-full w-[53px] items-center gap-[10px] bg-linear-to-b from-[#5c5c5c] to-[#3a3a3a] pl-[3px]">
                    <svg class="h-[17px] w-1" viewBox="0 0 4 17"><path d="M.5 0v17M3.500 0v17" stroke="#999" stroke-dasharray="1.500 1.500"/></svg>
                    <button aria-label="Close command line" class="text-[#ccc]"><svg class="h-2 w-2"><use href="#close"/></svg></button>
                    <button aria-label="Customize command line"><svg class="h-[14px] w-[14px]" viewBox="0 0 14 14"><path d="M1 3l3 2 1-1-2-3c4-1 6 2 5 5l6 6-2 2-6-6C3 9 0 7 1 3z" fill="#ccc"/></svg></button>
                </div>
                <button aria-label="Recent commands" class="ml-1 flex items-center gap-1 text-[#555]"><svg class="h-[15px] w-[15px]" viewBox="0 0 15 15"><path d="M.5 1.500h14v12H.5z" fill="#a9b4bf" stroke="#888"/><path d="M3 4l3 3-3 3M8 10.500h4" fill="none" stroke="#333" stroke-width="1.300"/></svg><svg class="h-1 w-[6px]"><use href="#down"/></svg></button>
                <input aria-label="Command" placeholder="Type a command" class="h-full flex-1 bg-transparent pl-[6px] font-['DejaVu_Sans_Mono',monospace] text-xs italic text-black outline-none placeholder:text-[#707070]">
                <svg class="mr-[5px] h-1 w-[7px]" viewBox="0 0 7 4"><path d="M0 4h7L3.500 0z" fill="#222"/></svg>
            </div>
        </div>
    </div>

    <!-- layout tabs and status bar -->
    <footer class="relative flex h-7 shrink-0 justify-between border-t border-[#545454] bg-[#373737]">
        <nav class="flex items-start pl-[11px] leading-[15px]">
            <a href="#" class="flex h-[17px] w-[58px] items-center justify-center rounded-b-lg bg-linear-to-b from-[#5a5a5a] to-[#8a8a8a] pb-[2px] font-bold text-white">Model</a>
            <a href="#" class="flex h-[17px] w-[66px] items-center justify-center rounded-b-lg bg-[#575757] pb-[2px] text-[#b0b4be]">Layout1</a>
            <button aria-label="New layout" class="ml-1 flex h-[15px] w-[22px] items-center justify-center rounded-b-lg border border-[#555] bg-[#494949]"><svg class="h-2 w-2" viewBox="0 0 8 8"><path d="M4 0v8M0 4h8" stroke="#ccc" stroke-width="2"/></svg></button>
        </nav>

        <div class="flex h-[25px] shrink-0 items-stretch border-y border-[#7b7b7b] bg-[#515151]">
            <div class="flex w-[153px] items-center justify-center border-l border-[#7b7b7b] pl-2 text-[#a3aab5]">22.3645, 34.1116, 0.0000</div>
            <button class="w-[50px] border-l border-[#7b7b7b] text-white">MODEL</button>
            <div class="flex items-stretch border-l border-[#7b7b7b]">
                <button aria-label="Grid" class="flex w-6 items-center justify-center"><svg class="h-4 w-4" viewBox="0 0 16 16"><path d="M4.500 0v16M8.500 0v16M12.500 0v16M0 4.500h16M0 8.500h16M0 12.500h16" stroke="#ddd"/></svg></button>
                <button aria-label="Snap" class="flex w-6 items-center justify-center"><svg class="h-4 w-4" viewBox="0 0 16 16"><path d="M2 2h2v2H2zM6 2h2v2H6zM10 2h2v2h-2zM2 7h2v2H2zM6 7h2v2H6zM10 7h2v2h-2zM2 12h2v2H2zM6 12h2v2H6zM10 12h2v2h-2z" fill="#ccc"/></svg></button>
                <button aria-label="Snap settings" class="flex w-4 items-center justify-center"><svg class="h-[4px] w-[7px]"><use href="#down"/></svg></button>
            </div>
            <div class="flex items-stretch border-l border-[#7b7b7b]">
                <button aria-label="Infer constraints" class="flex w-6 items-center justify-center"><svg class="h-4 w-4" viewBox="0 0 16 16"><path d="M9.500.5h5v5h-5zM9.500 5v6" fill="none" stroke="#ddd"/><path d="M1 10h7v6H1z" fill="#ddd"/></svg></button>
                <button aria-label="Dynamic input" class="flex w-6 items-center justify-center border-l border-[#7b7b7b] bg-[#5e8fc4]"><svg class="h-4 w-4" viewBox="0 0 16 16"><path d="M3.500 1v7M0 4.500h7" stroke="#fff"/><path d="M6 10h10v4H6z" fill="#fff"/></svg></button>
                <button aria-label="Ortho" class="flex w-6 items-center justify-center"><svg class="h-4 w-4" viewBox="0 0 16 16"><path d="M1.500 0v14.500H16M1.500 9.500h5v5" fill="none" stroke="#ddd"/></svg></button>
                <button aria-label="Polar tracking" class="flex w-6 items-center justify-center border-l border-[#7b7b7b]"><svg class="h-4 w-4" viewBox="0 0 16 16"><circle cx="7" cy="9" r="5.500" fill="none" stroke="#ddd" stroke-width="1.300"/><path d="M7 9l6-8M7 9h9" stroke="#ddd"/></svg></button>
                <button aria-label="Polar settings" class="flex w-4 items-center justify-center"><svg class="h-[4px] w-[7px]"><use href="#down"/></svg></button>
                <button aria-label="Isometric drafting" class="flex w-6 items-center justify-center"><svg class="h-4 w-4" viewBox="0 0 16 16"><path d="M1 2l13 12" stroke="#d3724f"/><path d="M8.500 0v16" stroke="#6fd48f"/><path d="M7 7h3v3H7z" fill="#eee"/></svg></button>
                <button aria-label="Isometric settings" class="flex w-4 items-center justify-center"><svg class="h-[4px] w-[7px]"><use href="#down"/></svg></button>
            </div>
            <div class="flex items-stretch border-l border-[#7b7b7b]">
                <button aria-label="Object snap tracking" class="flex w-6 items-center justify-center bg-[#5e8fc4]"><svg class="h-4 w-4" viewBox="0 0 16 16"><path d="M14 2L2 13.500h14" fill="none" stroke="#fff" stroke-width="1.300"/><circle cx="7.500" cy="8.500" r="1.500" fill="#fff"/></svg></button>
                <button aria-label="Object snap" class="flex w-6 items-center justify-center border-l border-[#7b7b7b] bg-[#5e8fc4]"><svg class="h-4 w-4" viewBox="0 0 16 16"><path d="M2.500 6v9.500h13v-12H6M.5.5h4v4h-4z" fill="none" stroke="#fff"/></svg></button>
                <button aria-label="Object snap settings" class="flex w-4 items-center justify-center"><svg class="h-[4px] w-[7px]"><use href="#down"/></svg></button>
            </div>
            <button aria-label="Lineweight display" class="flex w-6 items-center justify-center border-l border-[#7b7b7b]"><svg class="h-4 w-4" viewBox="0 0 16 16"><path d="M0 2h16v1H0zM0 5h10v3H0zM0 10h16v1H0zM0 12h11v3H0z" fill="#ddd"/></svg></button>
            <button aria-label="Transparency" class="flex w-6 items-center justify-center bg-[#5e8fc4]"><svg class="h-4 w-4" viewBox="0 0 16 16"><path d="M.5.5h15v15H.5z" fill="none" stroke="#fff"/><path d="M2 2h3v3H2zM8 2h3v3H8zM5 5h3v3H5zM11 5h3v3h-3zM2 8h3v3H2zM8 8h3v3H8zM5 11h3v3H5zM11 11h3v3h-3z" fill="#fff"/></svg></button>
            <button aria-label="Selection cycling" class="flex w-[26px] items-center justify-center border-l border-[#7b7b7b]"><svg class="h-4 w-4" viewBox="0 0 16 16"><path d="M3.500 0v6M0 2.500h7" stroke="#ccc" fill="none"/><path d="M6 5h10v11H6z" fill="#6fd48f"/></svg></button>
            <div class="flex items-stretch border-l border-[#7b7b7b]">
                <button aria-label="3D object snap" class="flex w-6 items-center justify-center"><svg class="h-4 w-4" viewBox="0 0 16 16"><path d="M3.500 8V4.500h7v8H6M3.500 4.500L7 .5h8v8l-4.500 4M10.500 4.500l4.500-4" fill="none" stroke="#ddd"/><path d="M.5 10.500h4v5h-4z" fill="none" stroke="#fccb79"/></svg></button>
                <button aria-label="3D snap settings" class="flex w-4 items-center justify-center"><svg class="h-[4px] w-[7px]"><use href="#down"/></svg></button>
            </div>
            <button aria-label="Dynamic UCS" class="flex w-6 items-center justify-center bg-[#5e8fc4]"><svg class="h-4 w-4" viewBox="0 0 16 16"><path d="M3.500 15V2M1 4l2.500-3L6 4M3 14.500h11M12 12l3 2.500-3 2" fill="none" stroke="#fff"/><path d="M11 3L7 9h3l-1 4 5-6h-3l2-4z" fill="#fff"/></svg></button>
            <div class="flex items-stretch border-l border-[#7b7b7b]">
                <button aria-label="Selection filter" class="flex w-6 items-center justify-center"><svg class="h-4 w-4" viewBox="0 0 16 16"><path d="M1.500 4.500h10v10h-10zM2 4l4-3.500h9.500v9L12 13" fill="none" stroke="#ddd" stroke-dasharray="2 1"/><path d="M0 3h3v3H0zM10 3h3v3h-3zM0 13h3v3H0zM10 13h3v3h-3z" fill="#7cc5fb"/></svg></button>
                <button aria-label="Filter settings" class="flex w-4 items-center justify-center"><svg class="h-[4px] w-[7px]"><use href="#down"/></svg></button>
                <button aria-label="Gizmo" class="flex w-6 items-center justify-center bg-[#5e8fc4]"><svg class="h-4 w-4" viewBox="0 0 16 16"><path d="M8 0v9M8 9l7 5M8 9l-7 5" fill="none" stroke="#fff"/><path d="M8 3l5 4v6l-5 2-5-2V7z" fill="none" stroke="#fff"/></svg></button>
                <button aria-label="Gizmo settings" class="flex w-4 items-center justify-center"><svg class="h-[4px] w-[7px]"><use href="#down"/></svg></button>
            </div>
            <div class="flex items-stretch border-l border-[#7b7b7b]">
                <button aria-label="Annotation visibility" class="flex w-6 items-center justify-center bg-[#5e8fc4]"><svg class="h-4 w-4" viewBox="0 0 16 16"><path d="M7 2l2 6 4 7h-3l-3-3-3 3H1l4-7z" fill="#fff"/><circle cx="13" cy="3" r="2" fill="none" stroke="#fff"/></svg></button>
                <button aria-label="Annotation autoscale" class="flex w-6 items-center justify-center"><svg class="h-4 w-4" viewBox="0 0 16 16"><path d="M7 2l2 6 4 7h-3l-3-3-3 3H1l4-7zM14 0l-3 4h2l-1 4 4-5h-2l1-3z" fill="#ddd"/></svg></button>
                <button aria-label="Annotation scale" class="flex w-6 items-center justify-center"><svg class="h-4 w-4" viewBox="0 0 16 16"><path d="M8 2l2 6 4 7h-3l-3-3-3 3H2l4-7z" fill="#ddd"/></svg></button>
                <button class="flex w-[75px] items-center justify-center gap-[5px] whitespace-nowrap">1:1 / 100%<svg class="h-[4px] w-[7px]"><use href="#down"/></svg></button>
            </div>
            <div class="flex items-stretch border-l border-[#7b7b7b]">
                <button aria-label="Workspace" class="flex w-6 items-center justify-center"><svg class="h-4 w-4" viewBox="0 0 16 16"><circle cx="8" cy="8" r="4.200" fill="none" stroke="#ddd" stroke-width="3"/><path d="M8 0v3M8 13v3M0 8h3M13 8h3M2.300 2.300l2.200 2.200M11.500 11.500l2.200 2.200M13.700 2.300l-2.200 2.200M4.500 11.500l-2.200 2.200" stroke="#ddd" stroke-width="2.400"/></svg></button>
                <button aria-label="Workspace settings" class="flex w-4 items-center justify-center"><svg class="h-[4px] w-[7px]"><use href="#down"/></svg></button>
                <button aria-label="Annotation monitor" class="flex w-[25px] items-center justify-center border-l border-[#7b7b7b]"><svg class="h-4 w-4" viewBox="0 0 16 16"><path d="M8 0v16M0 8h16" stroke="#ddd" stroke-width="1.500"/></svg></button>
            </div>
            <div class="flex items-stretch border-l border-[#7b7b7b]">
                <span class="flex w-6 items-center justify-center"><svg class="h-4 w-4" viewBox="0 0 16 16"><path d="M5 0h7v2H9v2h3v1H9v2h3v2H9v2h3v1H9v2h3v2H5z" fill="#ddd"/></svg></span>
                <button class="flex w-[74px] items-center justify-between px-[6px]">Decimal<svg class="h-[4px] w-[7px]"><use href="#down"/></svg></button>
            </div>
            <button aria-label="Quick properties" class="flex w-[25px] items-center justify-center border-l border-[#7b7b7b]"><svg class="h-4 w-4" viewBox="0 0 16 16"><path d="M2.500.5h11v15h-11z" fill="none" stroke="#ddd"/><path d="M4 3.500h8M5 6.500h2M8 6.500h4M5 9.500h2M8 9.500h4M5 12.500h2M8 12.500h4" stroke="#ddd"/></svg></button>
            <div class="flex items-stretch border-l border-[#7b7b7b]">
                <button aria-label="Lock UI" class="flex w-6 items-center justify-center"><svg class="h-4 w-4" viewBox="0 0 16 16"><path d="M7 12.500H.5V.5h14V6M.5 3h14" fill="none" stroke="#ddd"/><path d="M7 10h6v6H7z" fill="#ddd"/><path d="M11.500 10V8a1.800 1.800 0 0 1 4 0v2" fill="none" stroke="#ddd"/></svg></button>
                <button aria-label="Lock settings" class="flex w-4 items-center justify-center"><svg class="h-[4px] w-[7px]"><use href="#down"/></svg></button>
            </div>
            <button aria-label="Isolate objects" class="flex w-[25px] items-center justify-center border-l border-[#7b7b7b]"><svg class="h-4 w-4" viewBox="0 0 16 16"><path d="M1.500 1.500h5v5h-5zM7 10l3 5.500H3.500z" fill="none" stroke="#ddd"/><circle cx="12.500" cy="7" r="2.500" fill="none" stroke="#ddd"/></svg></button>
            <button aria-label="Hardware acceleration" class="mx-[2px] flex w-6 items-center justify-center bg-[#5e8fc4]"><svg class="h-4 w-4" viewBox="0 0 16 16"><circle cx="8" cy="8" r="7.500" fill="#8db9e2" stroke="#fff"/><path d="M4 12l7-8 1 1-6 8z" fill="#fff"/></svg></button>
            <div class="flex items-stretch border-l border-[#7b7b7b] pl-[6px]">
                <button aria-label="Plot details" class="flex w-6 items-center justify-center"><svg class="h-4 w-4" viewBox="0 0 16 16"><path d="M3.500 5V.5h9V5M.5 5.500h15v7H.5zM0 8.500h16" fill="none" stroke="#eee" stroke-width="1.400"/><path d="M3 10h10v6H3z" fill="#e0ad6e"/></svg></button>
                <button aria-label="Trusted DWG" class="flex w-6 items-center justify-center"><svg class="h-4 w-4" viewBox="0 0 16 16"><path d="M1 0h8l4 4v9H1z" fill="#8cc8f4"/><path d="M0 9h7v6H0z" fill="#f2d13a"/><path d="M3 5h8M6 2v6" stroke="#fff"/><path d="M7 12l3 3 5-6" fill="none" stroke="#12a012" stroke-width="2"/></svg></button>
            </div>
            <div class="flex items-stretch border-l border-[#7b7b7b] pr-[2px]">
                <button aria-label="Clean screen" class="flex w-6 items-center justify-center"><svg class="h-4 w-4" viewBox="0 0 16 16"><path d="M.5 2.500h15v11H.5z" fill="none" stroke="#ddd"/><path d="M9 5h4v4zM3 7v4h4z" fill="#ddd"/></svg></button>
                <button aria-label="Customization" class="flex w-6 items-center justify-center"><svg class="h-4 w-4" viewBox="0 0 16 16"><path d="M0 2.500h16M0 8h16M0 13.500h16" stroke="#ddd" stroke-width="1.500"/></svg></button>
            </div>
        </div>

        <!-- notification balloon -->
        <div class="absolute bottom-[34px] right-[29px] w-[247px] rounded-[14px] border border-black bg-[#ffffe1] px-[14px] pb-[9px] pt-2 text-black" role="status">
            <div class="flex items-center gap-[10px] leading-[18px]">
                <svg class="-ml-[5px] h-4 w-4" viewBox="0 0 16 16"><circle cx="8" cy="8" r="7.500" fill="#3a55a8" stroke="#9aa8cc"/><path d="M7 3h2v2H7zM6 7h3v5h1v1H6v-1h1V8H6z" fill="#fff"/></svg>
                <h2 class="flex-1 whitespace-nowrap text-[11px] font-bold">Plot and Publish Job Complete</h2>
                <button aria-label="Dismiss" class="-mr-[5px] flex h-4 w-4 items-center justify-center border border-[#777] bg-[#f0f0f0]"><svg class="h-2 w-2"><use href="#close"/></svg></button>
            </div>
            <p class="mt-1 leading-[18px]">No errors or warnings found</p>
            <a href="#" class="mt-[3px] block whitespace-nowrap leading-[18px] text-[#0000e0] underline">Click to view plot and publish details...</a>
            <svg class="absolute left-[170px] top-full h-5 w-5" viewBox="0 0 20 20"><path d="M2 -1L19 19V-1" fill="#ffffe1" stroke="#000"/></svg>
        </div>
    </footer>
</body>
</html>
